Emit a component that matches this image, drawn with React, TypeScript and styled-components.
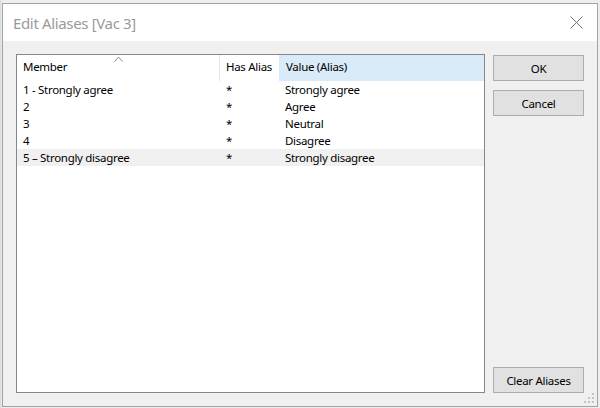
import React from "react";
import styled, { createGlobalStyle } from "styled-components";

const Global = createGlobalStyle`
  html, body { margin: 0; padding: 0; background: #e4e4e4; }
  body { width: 600px; height: 408px; overflow: hidden; font-family: "Segoe UI", "Noto Sans", "Open Sans", sans-serif; }
`;

const Desktop = styled.div`
  width: 600px;
  height: 408px;
  padding: 3px 0 0 2px;
  box-sizing: border-box;
  background: linear-gradient(to right, #d8d8d8 0, #eeeeee 2px);
`;

const Window = styled.div`
  position: relative;
  width: 596px;
  height: 404px;
  box-sizing: border-box;
  border: 1px solid #a3a3a3;
  background: #f0f0f0;
  display: flex;
  flex-direction: column;
`;

const TitleBar = styled.div`
  height: 37px;
  flex: none;
  background: #ffffff;
  display: flex;
  align-items: center;
  justify-content: space-between;
  padding: 0 14px 0 10px;
`;

const Title = styled.span`
  font-size: 15px;
  color: #9a9a9a;
  letter-spacing: -0.35px;
`;

const CloseIcon = styled.svg`
  width: 13px;
  height: 13px;
  display: block;
`;

const Client = styled.div`
  flex: 1;
  display: grid;
  grid-template-columns: 1fr 91px;
  gap: 8px;
  padding: 13px 13px 13px 13px;
  min-height: 0;
`;

const ListView = styled.div`
  border: 1px solid #828790;
  background: #ffffff;
  display: flex;
  flex-direction: column;
  font-size: 11.5px;
  letter-spacing: -0.3px;
  color: #000;
`;

const HeaderRow = styled.div`
  position: relative;
  height: 26px;
  display: grid;
  grid-template-columns: 203px 59px 1fr;
`;

const HeaderCell = styled.div<{ $active?: boolean; $divider?: boolean; $pad: number }>`
  display: flex;
  align-items: center;
  padding-left: ${(p) => p.$pad}px;
  padding-bottom: 3px;
  background: ${(p) => (p.$active ? "#d9ebf9" : "#ffffff")};
  border-right: ${(p) => (p.$divider ? "1px solid #e5e5e5" : "none")};
  white-space: nowrap;
`;

const SortArrow = styled.svg`
  position: absolute;
  left: 97px;
  top: 1px;
  width: 9px;
  height: 6px;
`;

const Row = styled.div<{ $shaded?: boolean }>`
  height: 17px;
  display: grid;
  grid-template-columns: 203px 59px 1fr;
  align-items: center;
  background: ${(p) => (p.$shaded ? "#f0f0f0" : "transparent")};
  white-space: nowrap;
`;

const Cell = styled.div<{ $pad: number }>`
  padding-left: ${(p) => p.$pad}px;
  line-height: 17px;
`;

const Buttons = styled.div`
  display: flex;
  flex-direction: column;
  gap: 9px;
  padding-top: 1px;
`;

const Button = styled.button<{ $bottom?: boolean }>`
  height: 26px;
  width: 91px;
  box-sizing: border-box;
  border: 1px solid #adadad;
  background: #e1e1e1;
  font-family: inherit;
  font-size: 11.5px;
  letter-spacing: -0.3px;
  color: #000;
  padding: 0;
  margin-top: ${(p) => (p.$bottom ? "auto" : "0")};
`;

const Grip = styled.svg`
  position: absolute;
  right: 2px;
  bottom: 2px;
  width: 11px;
  height: 11px;
`;

const rows = [
  ["1 - Strongly agree", "*", "Strongly agree"],
  ["2", "*", "Agree"],
  ["3", "*", "Neutral"],
  ["4", "*", "Disagree"],
  ["5 \u2013 Strongly disagree", "*", "Strongly disagree"],
];

export default function App() {
  return (
    <>
      <Global />
      <Desktop>
        <Window>
          <TitleBar>
            <Title>Edit Aliases [Vac 3]</Title>
            <CloseIcon viewBox="0 0 13 13">
              <path d="M0.5 0.5 L12.5 12.5 M12.5 0.5 L0.5 12.5" stroke="#707070" strokeWidth="1" fill="none" />
            </CloseIcon>
          </TitleBar>
          <Client>
            <ListView>
              <HeaderRow>
                <HeaderCell $pad={6} $divider>Member</HeaderCell>
                <HeaderCell $pad={6}>Has Alias</HeaderCell>
                <HeaderCell $pad={7} $active>Value (Alias)</HeaderCell>
                <SortArrow viewBox="0 0 9 6">
                  <path d="M0.5 5.5 L4.5 1 L8.5 5.5" stroke="#8a8a8a" strokeWidth="1" fill="none" />
                </SortArrow>
              </HeaderRow>
              {rows.map((r, i) => (
                <Row key={i} $shaded={i === 4}>
                  <Cell $pad={6}>{r[0]}</Cell>
                  <Cell $pad={6}>{r[1]}</Cell>
                  <Cell $pad={6}>{r[2]}</Cell>
                </Row>
              ))}
            </ListView>
            <Buttons>
              <Button>OK</Button>
              <Button>Cancel</Button>
              <Button $bottom>Clear Aliases</Button>
            </Buttons>
          </Client>
          <Grip viewBox="0 0 11 11">
            <g fill="#c4c4c4">
              <rect x="8" y="0" width="2" height="2" />
              <rect x="4" y="4" width="2" height="2" />
              <rect x="8" y="4" width="2" height="2" />
              <rect x="0" y="8" width="2" height="2" />
              <rect x="4" y="8" width="2" height="2" />
              <rect x="8" y="8" width="2" height="2" />
            </g>
          </Grip>
        </Window>
      </Desktop>
    </>
  );
}
